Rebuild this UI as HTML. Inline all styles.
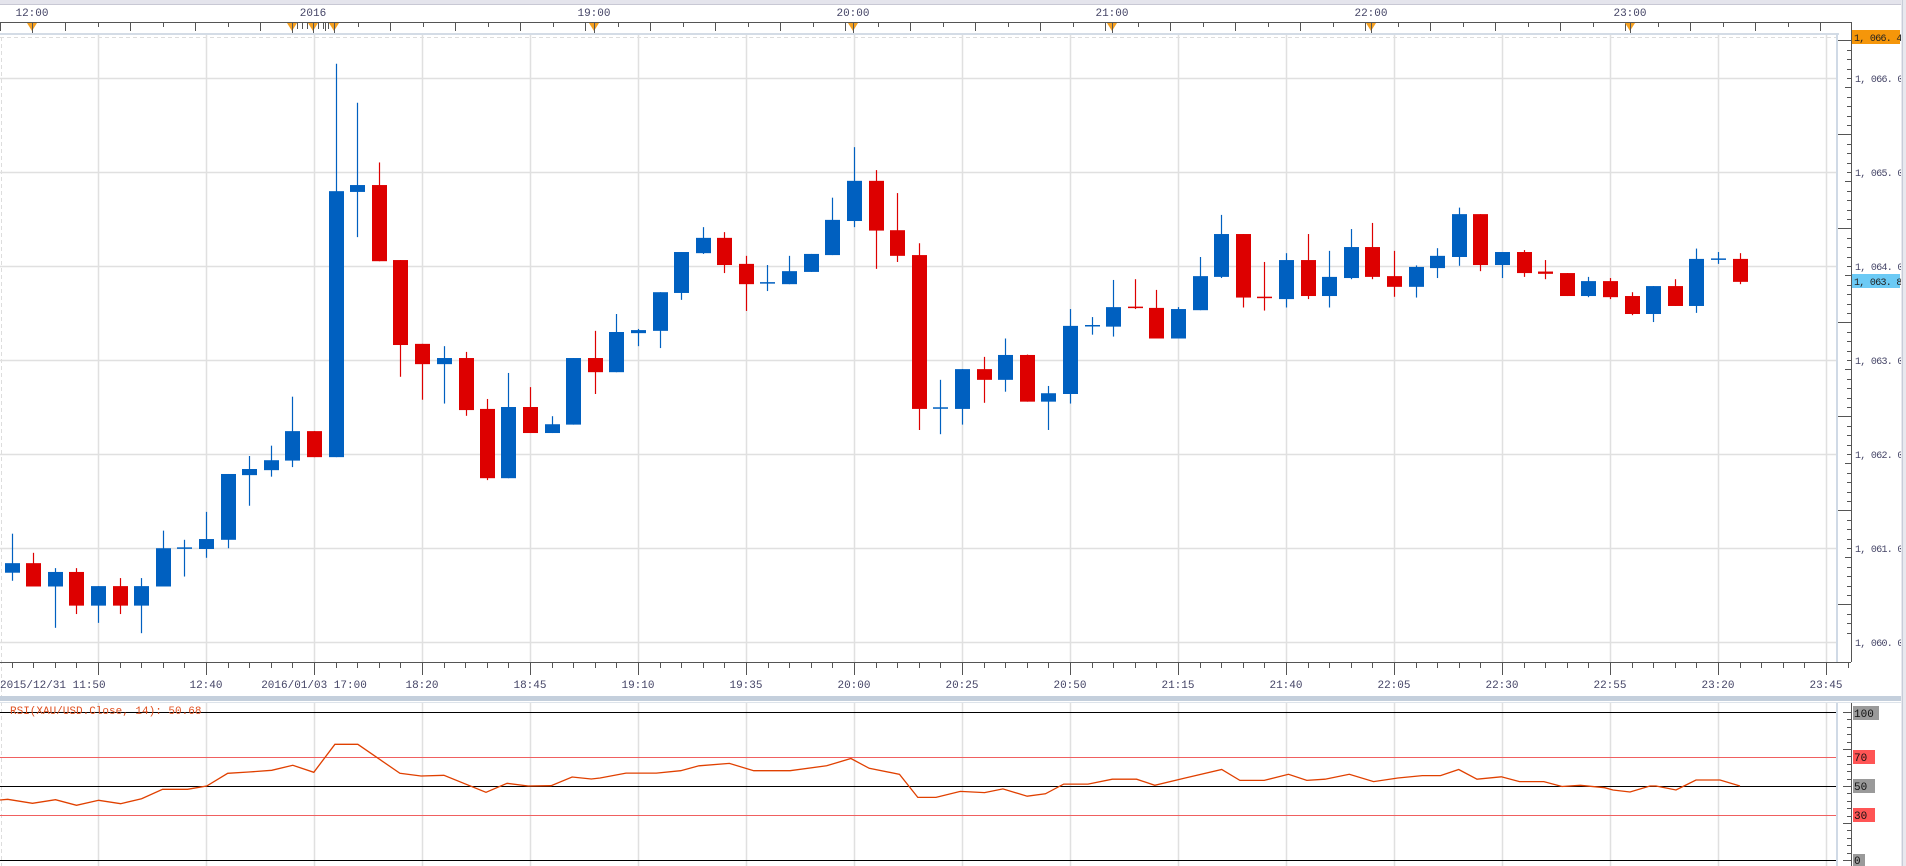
<!DOCTYPE html>
<html><head><meta charset="utf-8"><style>
html,body{margin:0;padding:0;background:#fff;width:1906px;height:866px;overflow:hidden}
svg{display:block}
text{font-family:"Liberation Mono",monospace;font-size:11px}
text.p{font-size:10px;letter-spacing:-0.7px}
</style></head><body>
<svg id="s" width="1906" height="866" xmlns="http://www.w3.org/2000/svg">
<rect x="0" y="0" width="1906" height="866" fill="#fff"/>
<rect x="0" y="0" width="1906" height="4" fill="#e4e4ec"/>
<rect x="0" y="4" width="1906" height="1" fill="#c8c8d4"/>
<g id="g"></g>
<rect x="1901" y="0" width="5" height="866" fill="#e8e8ee"/>
<rect x="1902" y="0" width="1" height="866" fill="#c8ccd8"/>
</svg>
<script>
var g=document.getElementById('g'),h='';
function L(x1,y1,x2,y2,c,w,extra){h+='<line x1="'+x1+'" y1="'+y1+'" x2="'+x2+'" y2="'+y2+'" stroke="'+c+'" stroke-width="'+(w||1)+'" '+(extra||'')+'/>';}
function R(x,y,w,hh,c){h+='<rect x="'+x+'" y="'+y+'" width="'+w+'" height="'+hh+'" fill="'+c+'"/>';}
function T(x,y,s,c,anchor,cls){h+='<text x="'+x+'" y="'+y+'" fill="'+(c||'#334')+'"'+(anchor?' text-anchor="'+anchor+'"':'')+(cls?' class="'+cls+'"':'')+'>'+s+'</text>';}
L(0,22.5,1851,22.5,'#555');
for(var i=0;i*32.5<1851;i++){var x=Math.round(i*32.5)+.5;L(x,22,x,i%2?27:31,'#555');}
[[32,'12:00'],[313,'2016'],[594,'19:00'],[853,'20:00'],[1112,'21:00'],[1371,'22:00'],[1630,'23:00']].forEach(function(a){T(a[0],16,a[1],'#446','middle');});
[32,292,313,334,594,853,1112,1371,1630].forEach(function(x){h+='<polygon points="'+(x-5)+',23 '+(x+5)+',23 '+x+',31" fill="#f5a020"/>';L(x+.5,23,x+.5,33,'#555');});
[297,302,307,318,323,328].forEach(function(x){L(x+.5,23,x+.5,29,'#555');});
R(0,33,1839,2,'#d4dce6');
L(0,37.5,1836,37.5,'#ddd',1,'stroke-dasharray="4,3"');
L(1.5,37,1.5,866,'#ddd',1,'stroke-dasharray="4,3"');
[78,172,266,360,454,548,642].forEach(function(y){L(0,y+.5,1836,y+.5,'#e0e0e0',1.5);});
for(var x=98;x<1840;x+=108){L(x+.5,35,x+.5,662,'#e0e0e0',1.5);L(x+.5,703,x+.5,866,'#e0e0e0',1.5);}
R(1836,33,2,630,'#d0dae6');
L(1851.5,22,1851.5,662,'#555');
for(var k=0;k<64;k++){var y=Math.round(78+(k-4)*9.4)+.5;if(y<36||y>660)continue;var maj=(k%10==0),mid=(k%5==0);L(maj?1838:(mid?1845:1847),y,1852,y,'#555');}
[[78,'1, 066. 00'],[172,'1, 065. 00'],[266,'1, 064. 00'],[360,'1, 063. 00'],[454,'1, 062. 00'],[548,'1, 061. 00'],[642,'1, 060. 00']].forEach(function(a){T(1855,a[0]+4,a[1],'#446',null,'p');});
R(1852,30,48,14,'#f5960a');T(1854,41,'1, 066. 44','#222',null,'p');
R(1852,274,48,14,'#6ccaf5');T(1854,285,'1, 063. 84','#222',null,'p');
L(0,662.5,1851,662.5,'#555');
for(var i=0;;i++){var x=Math.round(98+(i-5)*21.6);if(x>1851)break;if(x<0)continue;var maj=((i-5)%5==0);L(x+.5,662,x+.5,maj?675:668,'#555');}
var tl=['12:40','2016/01/03 17:00','18:20','18:45','19:10','19:35','20:00','20:25','20:50','21:15','21:40','22:05','22:30','22:55','23:20','23:45'];
T(0,688,'2015/12/31 11:50','#446');
tl.forEach(function(s,i){T(206+108*i,688,s,'#446','middle');});
R(0,696,1901,5,'#c4cfdc');L(0,702.5,1901,702.5,'#dde3ea');
var Z=[[0,[[35,1290,1367,1392,1413,0],[100,1340,1367,1428,1428,1],[165,1380,1390,1428,1536,0],[229,1380,1390,1478,1500,1],[295,1427,1427,1478,1523,0],[359,1406,1427,1478,1500,1],[424,1406,1427,1478,1550,0],[489,1282,1328,1428,1428,0],[553,1306,1327,1330,1402,0],[619,1233,1304,1330,1353,0],[684,1134,1134,1306,1328,0],[748,1087,1121,1137,1217,0],[814,1060,1098,1124,1141,0],[877,932,1022,1099,1116,0],[943,1022,1022,1090,1090,1],[1007,62,395,1090,1090,0],[1072,164,379,397,515,0],[1137,320,379,578,578,1],[1201,575,575,797,880,1],[1267,794,794,847,940,1],[1331,800,831,847,950,0]]],
[460,[[17,815,831,967,982,1],[81,938,964,1145,1150,1],[145,870,959,1145,1145,0],[211,907,959,1027,1027,1],[275,983,1004,1027,1027,0],[340,831,831,1005,1005,0],[405,760,831,868,925,1],[469,716,763,868,868,0],[535,755,758,766,800,0],[599,659,659,760,805,0],[664,554,554,661,679,0],[729,489,517,557,559,0],[793,502,517,588,609,1],[859,564,585,638,708,1],[922,588,634,638,656,0],[988,564,604,638,638,0],[1053,559,559,606,606,0],[1117,412,470,562,562,0],[1183,280,368,473,489,0],[1247,340,368,498,598,1],[1312,400,497,564,580,1],[1377,531,562,964,1019,1]]],
[920,[[61,888,961,965,1030,0],[127,860,860,964,1005,0],[191,828,860,888,948,1],[256,780,823,888,919,0],[321,822,823,945,945,1],[385,904,923,945,1019,0],[451,703,747,925,950,0],[516,724,746,750,770,0],[580,627,698,749,775,0],[646,625,698,703,703,1],[709,653,700,780,780,1],[775,698,703,780,780,0],[839,567,617,706,706,0],[904,457,507,619,622,0],[969,507,507,673,699,1],[1033,580,672,677,707,1],[1099,557,575,677,699,0],[1163,507,575,669,677,1],[1228,551,619,669,699,0],[1293,494,541,622,625,0],[1357,478,541,619,625,1]]],
[1380,[[43,551,617,645,671,1],[107,589,593,645,673,0],[172,544,564,596,622,0],[238,438,455,567,590,0],[301,455,455,588,604,1],[367,554,554,588,622,0],[431,549,554,609,619,1],[496,575,605,611,625,1],[561,609,609,669,669,1],[625,619,630,669,672,0],[691,622,630,672,677,1],[756,659,669,716,719,1],[820,643,643,716,737,0],[885,625,643,695,695,1],[949,545,572,695,713,0],[1015,554,572,575,585,0],[1080,557,572,632,638,1]]]];
Z.forEach(function(seg){seg[1].forEach(function(c){var xc=Math.round(seg[0]+c[0]/3);var f=function(v){return 40+v/2.613;};var col=c[5]?'#dd0000':'#0060c0';
L(xc+.5,f(c[1]),xc+.5,f(c[4]),col,1.2);var t=f(c[2]),b=f(c[3]);if(b-t<2){R(xc-7,t-0.5,15,1.5,col);}else R(xc-7,t,15,b-t,col);});});
R(1836,703,2,163,'#d0dae6');
L(0,712.5,1836,712.5,'#000');L(0,786.5,1836,786.5,'#000');L(0,860.5,1836,860.5,'#000');
L(0,757.5,1836,757.5,'#f06060');L(0,815.5,1836,815.5,'#f06060');
L(1851.5,703,1851.5,866,'#555');
for(var k=0;k<=20;k++){var y=Math.round(712+k*7.4)+.5;L(k%5==0?1843:1847,y,1852,y,'#555');}
R(1853,706,26,14,'#9a9a9a');T(1854,717,'100','#111');
R(1853,750,22,14,'#f55');T(1854,761,'70','#111');
R(1853,779,22,14,'#9a9a9a');T(1854,790,'50','#111');
R(1853,808,22,14,'#f55');T(1854,819,'30','#111');
R(1853,854,12,12,'#9a9a9a');T(1854,864,'0','#111');
h+='<text x="10" y="714" fill="#e05020" style="font-size:11px">RSI(XAU/USD.Close, 14): 50.68</text>';
var p1=[[0,480],[20,478],[85,490],[145,479],[200,496],[258,481],[315,491],[370,476],[425,448],[490,448],[540,438],[595,400],[650,396],[710,391],[765,376],[820,397],[875,313],[935,313],[1045,400],[1100,408],[1160,406],[1270,457],[1325,430],[1380,438],[1440,437],[1495,411],[1545,417],[1568,414]];
var pts=p1.map(function(p){return (p[0]/2.613).toFixed(1)+','+(640+p[1]/3).toFixed(1);});
var p2=[[515,636],[540,636],[560,634],[575,630],[600,628],[620,634],[650,634],[680,630],[700,624],[715,632],[740,637],[755,656],[770,656],[790,651],[810,652],[825,649],[845,655],[860,653],[875,645],[895,645],[915,641],[935,641],[950,646],[975,640],[1005,633],[1020,642],[1040,642],[1060,637],[1075,642],[1090,641],[1110,637],[1130,643],[1150,640],[1170,638],[1185,638],[1200,633],[1215,641],[1235,639],[1250,643],[1270,643],[1285,647],[1300,646],[1320,648]];
p2.forEach(function(p){pts.push((p[0]*1.2156).toFixed(1)+','+(p[1]*1.2156).toFixed(1));});
[[1613,790],[1630,792],[1650,786],[1656,786],[1676,790],[1688,784],[1696,780],[1720,780],[1740,786]].forEach(function(p){pts.push(p[0]+','+p[1]);});
h+='<polyline points="'+pts.join(' ')+'" fill="none" stroke="#e04000" stroke-width="1.3"/>';
g.innerHTML=h;
</script>
</body></html>
